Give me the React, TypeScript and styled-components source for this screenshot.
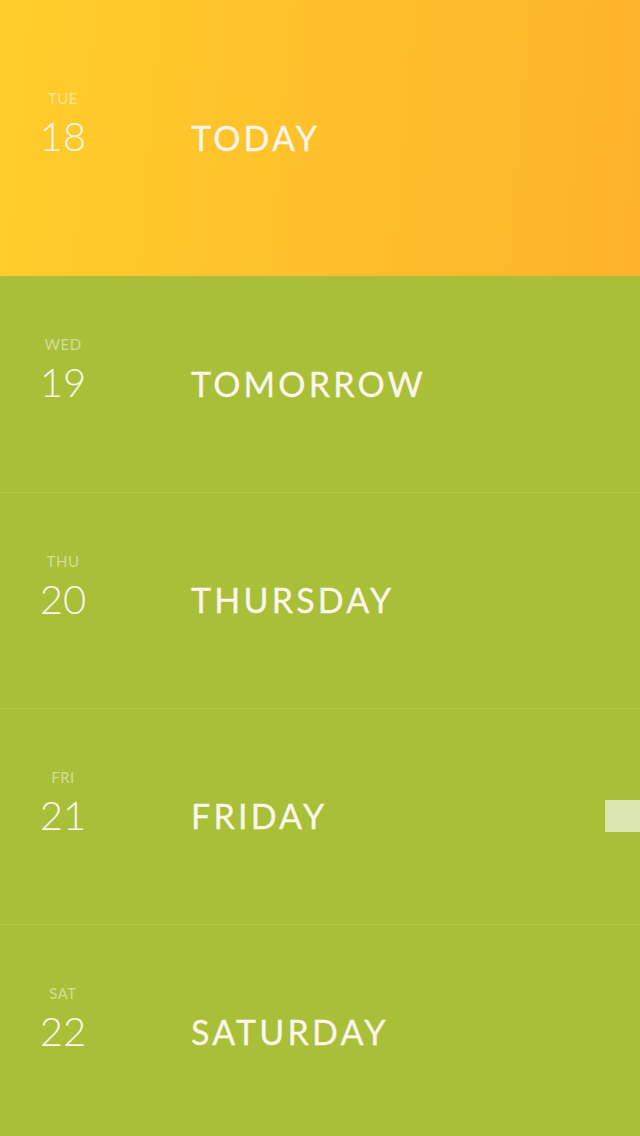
import React from "react";
import styled, { createGlobalStyle } from "styled-components";

const GlobalStyle = createGlobalStyle`
  html, body {
    margin: 0;
    padding: 0;
    background: #a9bf38;
  }
  #root {
    width: 640px;
    height: 1136px;
    overflow: hidden;
  }
`;

const Screen = styled.div`
  position: relative;
  width: 640px;
  height: 1136px;
  display: flex;
  flex-direction: column;
  overflow: hidden;
  background: #a9bf38;
`;

const DayRow = styled.div<{ $today?: boolean }>`
  flex: 0 0 ${(p) => (p.$today ? 276 : 216)}px;
  display: flex;
  align-items: center;
  box-sizing: border-box;
  background: ${(p) =>
    p.$today
      ? "linear-gradient(95deg, #ffcd2b 0%, #ffbf2b 55%, #fdb22b 100%)"
      : "#a9bf38"};
  border-top: ${(p) => (p.$today ? "none" : "1px solid #b2c64c")};
  &:nth-child(2) {
    border-top: none;
  }
`;

const DateCol = styled.div`
  width: 126px;
  display: flex;
  flex-direction: column;
  align-items: center;
  margin-bottom: 28px;
`;

const Weekday = styled.div<{ $today?: boolean }>`
  font-family: "Lato", "Noto Sans", sans-serif;
  font-size: 15px;
  line-height: 16px;
  letter-spacing: 0.5px;
  color: ${(p) => (p.$today ? "#fde58f" : "#d2dd9c")};
`;

const DayNum = styled.div`
  font-family: "Lato", "Roboto", sans-serif;
  font-weight: 300;
  font-size: 40px;
  line-height: 44px;
  margin-top: 8px;
  color: #fbf6ec;
`;

const Title = styled.div`
  margin-left: 65px;
  margin-bottom: 2px;
  font-family: "Lato", "Noto Sans", sans-serif;
  font-weight: 400;
  font-size: 34px;
  letter-spacing: 3.2px;
  color: #fbf6ec;
  -webkit-text-stroke: 0.3px #fbf6ec;
`;

const SideTab = styled.div`
  position: absolute;
  right: 0;
  top: 800px;
  width: 35px;
  height: 32px;
  background: #dbe5b0;
`;

const days = [
  { wd: "TUE", num: "18", title: "TODAY", today: true },
  { wd: "WED", num: "19", title: "TOMORROW" },
  { wd: "THU", num: "20", title: "THURSDAY" },
  { wd: "FRI", num: "21", title: "FRIDAY" },
  { wd: "SAT", num: "22", title: "SATURDAY" },
];

const App = () => {
  return (
    <>
      <GlobalStyle />
      <Screen>
        {days.map((d) => (
          <DayRow key={d.num} $today={d.today}>
            <DateCol>
              <Weekday $today={d.today}>{d.wd}</Weekday>
              <DayNum>{d.num}</DayNum>
            </DateCol>
            <Title>{d.title}</Title>
          </DayRow>
        ))}
        <SideTab />
      </Screen>
    </>
  );
};

export default App;
